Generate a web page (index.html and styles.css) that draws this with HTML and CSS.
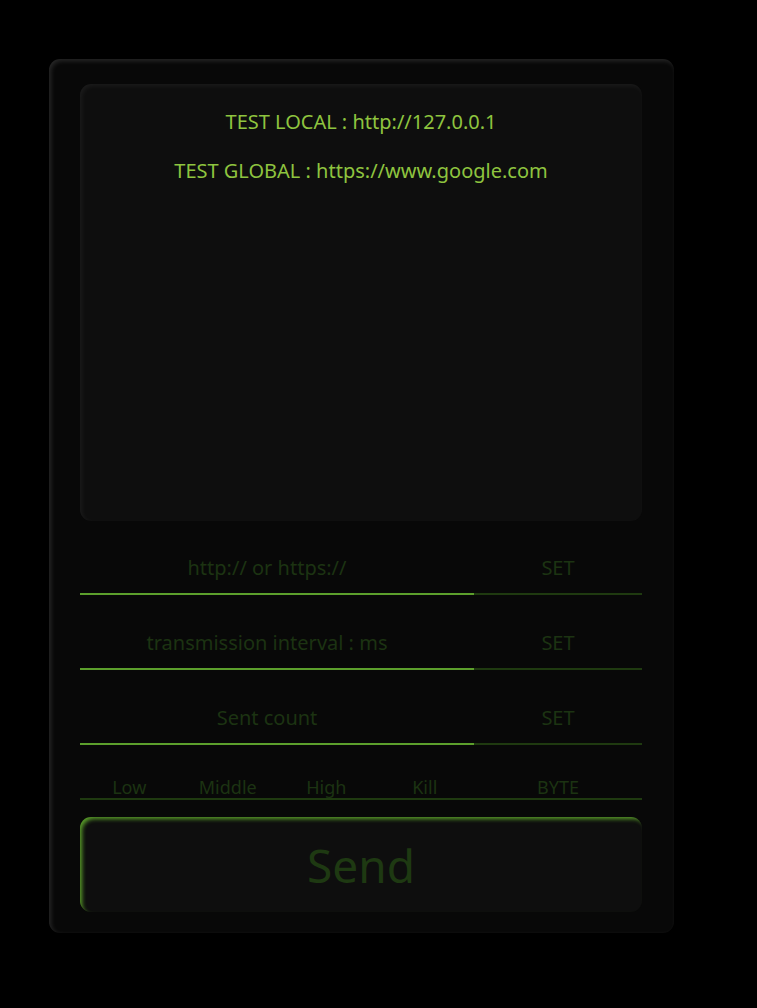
FILE: index.html
```html
<!DOCTYPE html>
<html>
<head>
<meta charset="utf-8">
<link rel="stylesheet" href="styles.css">
</head>
<body>
<div class="card">
  <div class="log">
    <p class="log-line">TEST LOCAL : http://127.0.0.1</p>
    <p class="log-line">TEST GLOBAL : https://www.google.com</p>
  </div>
  <div class="row">
    <div class="field">http:// or https://</div>
    <div class="set">SET</div>
  </div>
  <div class="row">
    <div class="field">transmission interval : ms</div>
    <div class="set">SET</div>
  </div>
  <div class="row">
    <div class="field">Sent count</div>
    <div class="set">SET</div>
  </div>
  <div class="levels">
    <div class="level-group">
      <span class="level">Low</span>
      <span class="level">Middle</span>
      <span class="level">High</span>
      <span class="level">Kill</span>
    </div>
    <div class="byte">BYTE</div>
  </div>
  <div class="send">Send</div>
</div>
</body>
</html>
```
FILE: styles.css
```css
html, body {
  margin: 0;
  padding: 0;
  background: #000;
}
body {
  padding: 59px 0 0 49px;
  font-family: "Noto Sans", "Open Sans", sans-serif;
}
.card {
  width: 625px;
  height: 874px;
  box-sizing: border-box;
  padding: 25px 32px 0 31px;
  background: #080808;
  border-radius: 11px;
  box-shadow: inset 2px 2px 5px rgba(255,255,255,0.13);
}
.log {
  height: 437px;
  box-sizing: border-box;
  background: #0e0e0e;
  border-radius: 11px;
  box-shadow: inset 2px 2px 5px rgba(255,255,255,0.06);
  padding-top: 24px;
}
.log-line {
  margin: 0 0 21px 0;
  text-align: center;
  color: #8ec43f;
  font-size: 20px;
  line-height: 28px;
}
.row {
  display: flex;
  height: 74px;
  margin-bottom: 1px;
}
.field {
  width: 394px;
  box-sizing: border-box;
  border-bottom: 2px solid #5c9f2c;
  padding-right: 20px;
  display: flex;
  align-items: flex-end;
  justify-content: center;
  padding-bottom: 12px;
  color: #1c3312;
  font-size: 20px;
  line-height: 26px;
}
.set {
  flex: 1;
  border-bottom: 2px solid #1f3a10;
  display: flex;
  align-items: flex-end;
  justify-content: center;
  padding-bottom: 12px;
  color: #1c3312;
  font-size: 20px;
  line-height: 26px;
}
.levels {
  display: flex;
  height: 54px;
  box-sizing: border-box;
  border-bottom: 2px solid #1f3a10;
  color: #1c3312;
  font-size: 18px;
  line-height: 22px;
}
.level-group {
  width: 394px;
  display: grid;
  grid-template-columns: repeat(4, 1fr);
  align-items: end;
}
.level {
  text-align: center;
}
.byte {
  flex: 1;
  text-align: center;
  align-self: flex-end;
}
.send {
  margin-top: 17px;
  height: 95px;
  border-radius: 11px;
  background: #0e0e0e;
  box-shadow: inset 3px 3px 4px -1px #5a9e2a;
  display: flex;
  align-items: center;
  justify-content: center;
  color: #1e3912;
  font-size: 46px;
}
```
